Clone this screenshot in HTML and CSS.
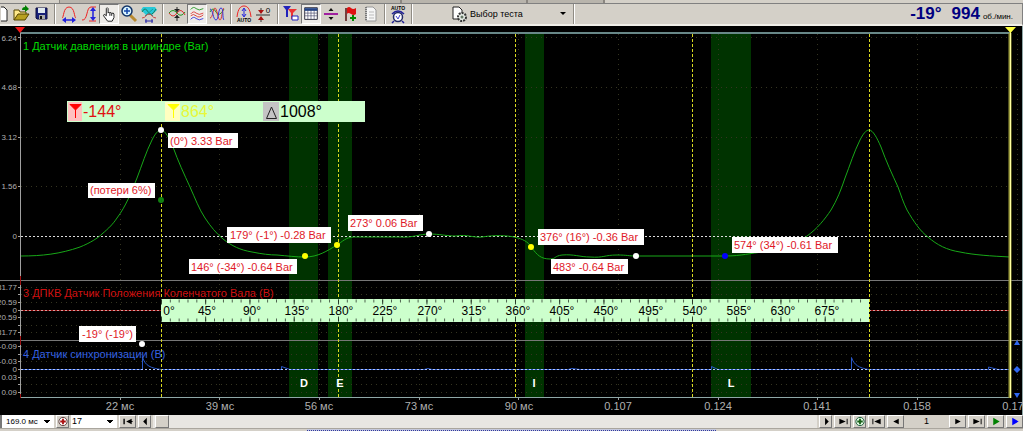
FILE: index.html
```html
<!DOCTYPE html>
<html lang="ru">
<head>
<meta charset="utf-8">
<title>Датчик давления в цилиндре</title>
<link rel="stylesheet" href="styles.css">
</head>
<body>
<div class="tabs"><span class="tab tab-first"></span><span class="tab tab-long"></span><span class="tab tab-mid"></span><span class="tab tab-short"></span></div>
<header class="toolbar">
  <div class="tools">
    <button class="tool tool-cut" aria-label="Новый"><svg viewBox="0 0 10 20"><path d="M-5 3H3L6 6V17H-5Z" fill="#fff" stroke="#222"/></svg></button>
    <button class="tool" aria-label="Открыть"><svg viewBox="0 0 20 20"><path d="M3 16V6H8L9 8H15V11" fill="#ffe98a" stroke="#554400"/><path d="M3 16L7 10H18L14 16Z" fill="#b8a020" stroke="#554400"/><path d="M11 6Q11 3 14 3V1L18 5L14 8V6Z" fill="#008000"/></svg></button>
    <button class="tool" aria-label="Сохранить"><svg viewBox="0 0 20 20"><path d="M5 4H16V15H6L5 14Z" fill="#182078" stroke="#101040"/><path d="M7 4H14V9H7Z" fill="#dfe8ee"/><path d="M8 11H14V15H8Z" fill="#aaa"/><path d="M9 12H11V15H9Z" fill="#111"/></svg></button>
    <i class="sep wide"></i>
    <button class="tool" aria-label="Период"><svg viewBox="0 0 20 20" fill="none"><path d="M3 14C5 14 4 3 10 3S15 14 17 14" stroke="#e22"/><path d="M6 16H14" stroke="#22d" stroke-width="1.5"/><path d="M3 16L7 13V19ZM17 16L13 13V19Z" fill="#22d"/></svg></button>
    <button class="tool" aria-label="Амплитуда"><svg viewBox="0 0 20 20" fill="none"><path d="M3 16C9 17 7 3 12 3H17M10 17H17" stroke="#e22"/><path d="M14 5V15" stroke="#22d" stroke-width="1.5"/><path d="M14 3L11 7H17ZM14 17L11 13H17Z" fill="#22d"/></svg></button>
    <button class="tool pressed" aria-label="Рука"><svg viewBox="0 0 20 20"><path d="M7 12V4Q8 2 9 4V9Q10 7 11 9Q12 7 13 9.500Q15 8 15.500 10V14L13.500 18H8.500L4 12Q4 9 7 12" fill="#fff" stroke="#111"/><path d="M11 9V12M13 9.500V12" stroke="#111"/></svg></button>
    <button class="tool" aria-label="Увеличить"><svg viewBox="0 0 20 20"><path d="M11 11L17 17" stroke="#b88a30" stroke-width="3"/><circle cx="8" cy="7" r="5" fill="#d8f4ff" stroke="#113366" stroke-width="1.500"/><path d="M5 7H11M8 4V10" stroke="#1144aa" stroke-width="1.500"/></svg></button>
    <button class="tool" aria-label="Сжать"><svg viewBox="0 0 20 20"><path d="M4 3H16L18 6L13 11H7L2 6Z" fill="#28c8d8"/><path d="M3 8Q6 2 9 8T17 5" fill="none" stroke="#187858"/><path d="M6 5L14 12M14 5L6 12" stroke="#16a0a0"/><path d="M3 14C7 14 7 10 10 10S13 14 17 14" fill="none" stroke="#c44"/><path d="M6 17H14M7 15V19M13 15V19" stroke="#22a"/></svg></button>
    <i class="sep wide"></i>
    <button class="tool" aria-label="Сброс"><svg viewBox="0 0 20 20" fill="none"><path d="M2 9Q6 4 10 9T18 8" stroke="#292"/><path d="M2 9Q6 15 10 9T18 11" stroke="#d33"/><path d="M10 3V8M10 11V17" stroke="#222"/><path d="M7 5H13L10 8ZM7 14H13L10 11Z" fill="#222"/></svg></button>
    <button class="tool pressed" aria-label="Раздельно"><svg viewBox="0 0 20 20" fill="none"><path d="M3 5Q6 1 9 4T17 4" stroke="#292"/><path d="M3 10Q6 6 9 9T17 9M3 12Q6 9 9 12T17 11" stroke="#d33"/><path d="M3 16Q6 12 9 15T17 15" stroke="#33d"/></svg></button>
    <button class="tool" aria-label="Вместе"><svg viewBox="0 0 20 20" fill="none"><path d="M3 8Q6 2 9 8T17 5" stroke="#292"/><path d="M3 14C6 14 6 4 8 4S11 16 13 16S15 5 17 4" stroke="#d33"/><path d="M3 5C6 5 6 16 9 16S11 4 14 4S15 15 17 16" stroke="#33d"/></svg></button>
    <i class="sep"></i>
    <button class="tool" aria-label="Авто масштаб"><svg viewBox="0 0 20 20"><path d="M3 13C4 4 7 2 10 2S16 4 17 13" fill="none" stroke="#e22"/><path d="M10 5V12M8 7L10 4L12 7M8 10L10 13L12 10" fill="none" stroke="#22d"/><text x="10" y="18" class="micro">AUTO</text></svg></button>
    <button class="tool" aria-label="Ноль"><svg viewBox="0 0 20 20"><path d="M2 11H16M7 4V9M7 13V18" stroke="#333"/><path d="M4 6H10L7 10ZM4 16H10L7 12Z" fill="#a11"/><text x="14" y="9" class="zero">0</text></svg></button>
    <i class="sep"></i>
    <button class="tool" aria-label="Маркеры"><svg viewBox="0 0 20 20"><path d="M2 2H10L7 6V13H5V6Z" fill="#2222bb"/><path d="M7 5H16L12 9V15H10V9Z" fill="#e33"/><path d="M11 12H17V16H11Z" fill="#fff" stroke="#22b"/></svg></button>
    <button class="tool pressed" aria-label="Таблица"><svg viewBox="0 0 20 20"><path d="M3 3H17V16H3Z" fill="#fff" stroke="#223"/><path d="M3 5H17" stroke="#248" stroke-width="3"/><path d="M3 9H17M3 12H17M6.500 5V16M10 5V16M13.500 5V16" stroke="#446" stroke-width=".7"/></svg></button>
    <button class="tool" aria-label="Разделить"><svg viewBox="0 0 20 20"><path d="M3 10H17" stroke="#a020a0" stroke-width="2"/><path d="M10 4L12.500 7H7.500ZM10 16L12.500 13H7.500Z" fill="#111"/></svg></button>
    <button class="tool" aria-label="Флаг"><svg viewBox="0 0 20 20"><path d="M5 4V17" stroke="#511" stroke-width="1.500"/><path d="M6 4Q8 2 10 4T15 4V10Q13 12 10 10T6 10Z" fill="#d11"/><path d="M9 14H15M12 11V17" stroke="#080" stroke-width="2"/></svg></button>
    <button class="tool" aria-label="Отчёт"><svg viewBox="0 0 20 20"><path d="M5 3H12L15 6V17H5Z" fill="#f6f6f6" stroke="#999"/><path d="M5 3V17" stroke="#777" stroke-dasharray="1 1" stroke-width="2"/><path d="M8 8H13M8 11H13M8 14H13" stroke="#bbb"/></svg></button>
    <i class="sep"></i>
    <button class="tool" aria-label="Авто тест"><svg viewBox="0 0 20 20"><circle cx="10" cy="13" r="4.500" fill="#fff" stroke="#222a66" stroke-width="1.500"/><path d="M8 12L10 15L12 11" fill="none" stroke="#44c"/><path d="M4 10Q10 4 16 10M6 17L4 19M14 17L16 19" fill="none" stroke="#229" stroke-width="1.500"/><text x="10" y="6" class="micro">AUTO</text></svg></button>
    <i class="sep"></i>
  </div>
  <button class="test-menu"><svg class="test-icon" viewBox="0 0 18 18"><path d="M2 2H8L11 5V14H2Z" fill="#fff" stroke="#222"/><circle cx="11" cy="12" r="4" fill="#e8eee8" stroke="#333" stroke-width="2" stroke-dasharray="2 1"/><circle cx="11" cy="12" r="1.500" fill="#676"/></svg><span>Выбор теста</span><svg class="caret" viewBox="0 0 6 4"><path d="M0 0H6L3 3Z"/></svg></button>
  <i class="sep"></i>
  <div class="reading"><b>-19°</b><b>994</b><small>об./мин.</small></div>
</header>

<main class="scope">
<svg class="plot" viewBox="0 26 1023 389" role="img" aria-label="Осциллограмма">
  <g class="bands"><path d="M289 33H318V397H289ZM328 33H352V397H328ZM525 33H544V397H525ZM711 33H751V397H711Z"/></g>
  <g class="grid">
    <path d="M120.500 34V397M219.500 34V397M319.500 34V397M419.500 34V397M518.500 34V397M618.500 34V397M718.500 34V397M817.500 34V397M917.500 34V397M1017.500 34V397"/>
    <path d="M21 37.500H1010M21 87.500H1010M21 137.500H1010M21 186.500H1010M21 287.500H1010M21 294.500H1010M21 302.500H1010M21 317.500H1010M21 325.500H1010M21 332.500H1010M21 346.500H1010M21 354.500H1010M21 361.500H1010M21 377.500H1010M21 384.500H1010M21 392.500H1010"/>
  </g>
  <path class="divider" d="M0 280.500H1023M0 340.500H1023"/>
  <path class="frame-top" d="M20 33H1011"/>
  <path class="frame-bottom" d="M20 397.500H1011"/>
  <path class="axis" d="M20.500 33V397M18 37.500H20M18 87.500H20M18 137.500H20M18 186.500H20M18 236.500H20M18 287.500H20M18 294.500H20M18 302.500H20M18 310.500H20M18 317.500H20M18 325.500H20M18 332.500H20M18 346.500H20M18 354.500H20M18 361.500H20M18 369.500H20M18 377.500H20M18 384.500H20M18 392.500H20M120.500 398V400M219.500 398V400M319.500 398V400M419.500 398V400M518.500 398V400M618.500 398V400M718.500 398V400M817.500 398V400M917.500 398V400"/>
  <path class="red-line" d="M20.500 276V285M20.500 336V345M20.500 394V398"/>
  <path class="zero-line" d="M21 236.500H1010"/>
  <path class="red-line" d="M21 310.500H1010"/><path class="zero-line faint" d="M21 310.500H1010"/>
  <path class="sync" d="M21 369.500H142.500V357C145 366 151 368 161 369.500H281.500V366.500L290 369.500H424L428 368.500L432 369.500H568L572 368.500L580 369.500H711.500V366.500L718 369.500H851.500V357.500C854 365 859 368 869 369.500H988.500V367L998 369.500H1010"/>
  <path class="zero-line blue-dots" d="M21 369.500H1010"/>
  <path class="pressure" d="M21 256C42 256 60 254 80 247C90 243 98 238 102 234C109 228 113 224 117 218C126 206 131 193 137 178C142 165 146 152 152 140C155 134 158 130 161 130C165 130 169 138 173 147C178 161 184 174 190 187C195 198 199 209 205 218C211 227 216 233 223 239C232 246 240 250 252 252C262 254 270 255 277 255C288 256 296 257 305 257C318 257 327 251 337 245C342 242 346 237 354 237H400C412 238 420 234 429 234C440 234 446 236 456 236C466 234 474 238 482 237C494 235 508 235 518 238C525 240 529 243 532 248C537 255 541 259 550 259C556 259 554 256 562 255C574 254 580 257 590 257C604 258 604 255 617 255C628 255 628 256 636 256H725C742 256 750 253 764 252C782 250 796 244 807 236C817 229 825 219 831 210C837 200 841 190 845 178C850 165 854 152 860 140C863 134 866 130 869 130C873 130 877 138 881 147C886 161 892 174 898 187C901 195 903 202 907 210C914 222 920 231 928 237C937 245 947 250 960 252C974 255 991 256 1010 257"/>
  <path class="marker" d="M161.500 34V397M338.500 34V397M515.500 34V397M692.500 34V397M869.500 34V397"/>
  <path class="cursor-glow" d="M1010 33V398"/><path class="cursor" d="M1010.500 30V398"/>
  <path class="cursor-head" d="M1005 27H1016L1010.500 33Z"/>
  <path class="origin-head" d="M15 27H25L20 33Z"/>
  <path class="frame-bottom" d="M1022.500 26V415"/>

  <g class="y-label">
    <text x="17" y="41">6.24</text><text x="17" y="90">4.68</text><text x="17" y="140">3.12</text><text x="17" y="189">1.56</text><text x="17" y="239">0</text>
    <text x="17" y="290">31.77</text><text x="17" y="305">20.59</text><text x="17" y="313">0</text><text x="17" y="320">20.59</text><text x="17" y="335">31.77</text>
    <text x="17" y="349">-0.09</text><text x="17" y="364">-0.03</text><text x="17" y="372">0</text><text x="17" y="380">0.03</text><text x="17" y="395">0.09</text>
  </g>
  <g class="x-label">
    <text x="120" y="410">22 мс</text><text x="220" y="410">39 мс</text><text x="319" y="410">56 мс</text><text x="419" y="410">73 мс</text><text x="519" y="410">90 мс</text>
    <text x="618" y="410">0.107</text><text x="718" y="410">0.124</text><text x="817" y="410">0.141</text><text x="917" y="410">0.158</text><text x="1013" y="410">0.17</text>
  </g>
  <g class="channel">
    <text class="ch1" x="23" y="50">1 Датчик давления в цилиндре (Bar)</text>
    <text class="ch3" x="23" y="297">3 ДПКВ Датчик Положения Коленчатого Вала (В)</text>
    <text class="ch4" x="23" y="358">4 Датчик синхронизации (В)</text>
  </g>

  <g class="ruler">
    <path class="ruler-bg" d="M161 299H869V322H161Z"/>
    <path class="ruler-ticks" pathLength="800" d="M161 301H869"/><path class="ruler-ticks" pathLength="800" d="M161 320H869"/>
    <path class="ruler-major" pathLength="800" d="M161 302H869"/><path class="ruler-major" pathLength="800" d="M161 319H869"/>
    <text x="169" y="315">0°</text><text x="207" y="315">45°</text><text x="252" y="315">90°</text><text x="297" y="315">135°</text><text x="341" y="315">180°</text><text x="385" y="315">225°</text><text x="430" y="315">270°</text><text x="474" y="315">315°</text><text x="518" y="315">360°</text><text x="562" y="315">405°</text><text x="606" y="315">450°</text><text x="651" y="315">495°</text><text x="695" y="315">540°</text><text x="739" y="315">585°</text><text x="783" y="315">630°</text><text x="827" y="315">675°</text>
  </g>

  <g class="phase"><text x="304" y="387">D</text><text x="340" y="387">E</text><text x="534" y="387">I</text><text x="731" y="387">L</text></g>

  <g class="notes">
    <rect x="168" y="133" width="70" height="15"/><text x="170" y="145">(0°) 3.33 Bar</text>
    <rect x="88" y="183" width="67" height="15"/><text x="90" y="194">(потери 6%)</text>
    <rect x="227" y="227" width="104" height="16"/><text x="230" y="239">179° (-1°) -0.28 Bar</text>
    <rect x="189" y="259" width="108" height="15"/><text x="191" y="271">146° (-34°) -0.64 Bar</text>
    <rect x="348" y="215" width="75" height="16"/><text x="350" y="227">273° 0.06 Bar</text>
    <rect x="538" y="229" width="106" height="16"/><text x="540" y="241">376° (16°) -0.36 Bar</text>
    <rect x="551" y="259" width="77" height="15"/><text x="553" y="271">483° -0.64 Bar</text>
    <rect x="732" y="237" width="106" height="16"/><text x="734" y="249">574° (34°) -0.61 Bar</text>
    <rect x="79" y="326" width="57" height="16"/><text x="82" y="338">-19° (-19°)</text>
  </g>
  <g class="dots">
    <circle cx="161" cy="130" r="3"/><circle cx="429" cy="234" r="3"/><circle cx="636" cy="256" r="3"/><circle cx="142" cy="344" r="3"/>
    <circle class="yellow" cx="305" cy="256" r="3"/><circle class="yellow" cx="337" cy="245" r="3"/><circle class="yellow" cx="531" cy="247" r="3"/>
    <circle class="green" cx="161" cy="200" r="3"/><circle class="blue" cx="725" cy="256" r="3"/>
  </g>

  <g class="readout">
    <path class="ruler-bg" d="M67 101H365V122H67Z"/>
    <path class="cell-red" d="M68 102H82V121H68Z"/><path class="cell-yellow" d="M165 102H180V121H165Z"/><path class="cell-gray" d="M263 102H279V121H263Z"/>
    <path class="mark-red" d="M70 104.500H81L75.500 110V118V110Z"/><path class="mark-yellow" d="M168 104.500H179L173.500 110V118V110Z"/><path class="mark-delta" d="M271.500 107L276.500 118.500H266.500Z"/>
    <text class="t-red" x="83" y="117">-144°</text><text class="t-yellow" x="181" y="117">864°</text><text x="280" y="117">1008°</text>
  </g>

  <path class="side-arrows" d="M1014 345L1017 340L1020 345ZM1017 366L1020.500 369.500L1017 373L1013.500 369.500ZM1014 393L1017 398L1020 393Z"/>
</svg>
</main>

<footer class="transport">
  <select class="field span" aria-label="Развёртка"><option>169.0 мс</option></select>
  <button class="nav small" aria-label="Увеличить масштаб"><svg viewBox="0 0 12 12"><circle cx="6" cy="6" r="4.500" fill="#fff" stroke="#533"/><path d="M3 6H9M6 3V9" stroke="#a11" stroke-width="2"/></svg></button>
  <select class="field count" aria-label="Цилиндр"><option>17</option></select>
  <button class="nav" aria-label="В начало"><svg viewBox="0 0 12 12"><path d="M1 3H2.500V9H1ZM10 3V9L4 6ZM9 5.500H11V6.500H9Z"/></svg></button>
  <button class="nav small" aria-label="Влево"><svg viewBox="0 0 12 12"><path d="M8 2V10L4 6Z"/></svg></button>
  <div class="track"><button class="thumb" aria-label="Прокрутка"></button></div>
  <button class="nav small" aria-label="Вправо"><svg viewBox="0 0 12 12"><path d="M5 2V10L9 6Z"/></svg></button>
  <button class="nav" aria-label="В конец"><svg viewBox="0 0 12 12"><path d="M10 3H11V9H10ZM2 3V9L9 6Z"/></svg></button>
  <button class="nav small" aria-label="Добавить кадр"><svg viewBox="0 0 12 12"><circle cx="6" cy="6" r="4.500" fill="#e8ffe8" stroke="#153"/><path d="M3 6H9M6 3V9" stroke="#186018" stroke-width="2"/></svg></button>
  <button class="nav" aria-label="Первый кадр"><svg viewBox="0 0 12 12"><path d="M1 3H2V9H1ZM10 3V9L3 6Z"/></svg></button>
  <button class="nav" aria-label="Предыдущий кадр"><svg viewBox="0 0 12 12"><path d="M9 3V9L3 6Z"/></svg></button>
  <output class="frame-no">1</output>
  <button class="nav" aria-label="Следующий кадр"><svg viewBox="0 0 12 12"><path d="M3 3V9L9 6Z"/></svg></button>
  <button class="nav" aria-label="Последний кадр"><svg viewBox="0 0 12 12"><path d="M10 3H11V9H10ZM2 3V9L9 6Z"/></svg></button>
  <button class="nav go" aria-label="Пуск"><svg viewBox="0 0 12 12"><path d="M3 2V10L10 6Z"/></svg></button>
  <button class="nav run" aria-label="Воспроизвести"><svg viewBox="0 0 12 12"><path d="M3 2V10L10 6Z"/></svg></button>
</footer>
<div class="splitter"><span class="grip"></span></div>
</body>
</html>
```
FILE: styles.css
```css
* { box-sizing: border-box; }
body {
  margin: 0;
  min-height: 100vh;
  display: flex;
  flex-direction: column;
  overflow: hidden;
  background: #d4d0c8;
  font-family: "Liberation Sans", Arial, sans-serif;
  color: #000;
}
button { padding: 0; border: 0; background: none; font: inherit; color: inherit; }

.tabs { display: flex; height: 4px; border-bottom: 1px solid #808080; }
.tab { background: #b8b4ac; border-right: 2px solid #8a8680; }
.tab-first { width: 60px; background: #d4d0c8; border-right-width: 1px; }
.tab-long { width: 342px; }
.tab-mid { width: 126px; }
.tab-short { width: 77px; }

.toolbar {
  display: flex;
  align-items: stretch;
  height: 22px;
  border-bottom: 2px solid #f0eee8;
  border-right: 1px solid #808080;
}
.tools { display: flex; }
.tool { width: 20px; display: flex; align-items: center; justify-content: center; }
.tool svg { width: 20px; height: 20px; }
.tool-cut { width: 11px; }
.tool-cut svg { width: 10px; }
.pressed { background: #eeece8; border: 1px solid #fff; border-top-color: #777; border-left-color: #777; }
.sep { width: 7px; flex: none; background: linear-gradient(90deg, transparent 3px, #908c84 3px, #908c84 4px, #fff 4px, #fff 5px, transparent 5px); }
.sep.wide { width: 8px; }
.micro { font-size: 5px; font-weight: bold; text-anchor: middle; }
.zero { font-size: 8px; text-anchor: middle; }
.test-menu { display: flex; align-items: center; gap: 1px; width: 155px; padding: 0 4px 0 36px; font-size: 9px; }
.test-menu span { flex: 1; text-align: left; white-space: nowrap; }
.test-icon { width: 18px; height: 18px; }
.caret { width: 6px; height: 4px; }
.reading { margin-left: auto; padding-right: 9px; display: flex; align-items: baseline; color: #000080; font-size: 17px; line-height: 20px; }
.reading b + b { margin-left: 10px; }
.reading small { margin-left: 3px; font-size: 8px; color: #000; }

.scope { background: #000; }
.plot { display: block; width: 100%; height: auto; }
.plot path { fill: none; }
.plot .bands path { fill: #003300; }
.grid { stroke: #343420; stroke-dasharray: 1 4; }
.divider { stroke: #777; }
.frame-top { stroke: #688888; stroke-width: 2; }
.frame-bottom { stroke: #8fa8a8; }
.axis { stroke: #a0a0a0; }
.zero-line { stroke: #ddd; stroke-dasharray: 2 2; }
.faint { stroke: #d8a0a0; }
.red-line { stroke: #a01010; }
.sync { stroke: #2858c8; }
.blue-dots { stroke: #b8c8ff; }
.pressure { stroke: #18a818; }
.marker { stroke: #d8d820; stroke-dasharray: 3 2; }
.cursor-glow { stroke: #a0a040; stroke-width: 3; }
.cursor { stroke: #ffffa0; }
.plot .cursor-head { fill: #ffff40; }
.plot .origin-head { fill: #f01818; }
.plot .side-arrows { fill: #3068f0; }

.y-label { fill: #b0b0b0; font-size: 8px; text-anchor: end; }
.x-label { fill: #b0b0b0; font-size: 11px; text-anchor: middle; }
.channel { font-size: 11px; }
.ch1 { fill: #00d800; }
.ch3 { fill: #d01010; }
.ch4 { fill: #3460e0; }

.plot .ruler-bg { fill: #ccffcc; }
.ruler { font-size: 12px; text-anchor: middle; }
.ruler-ticks { stroke: #405040; stroke-width: 3; stroke-dasharray: 1 9; }
.ruler-major { stroke: #203020; stroke-width: 5; stroke-dasharray: 1 49; }
.phase { fill: #fff; font-size: 11px; font-weight: bold; text-anchor: middle; }
.notes { font-size: 11px; fill: #e01828; }
.notes rect { fill: #fff; }
.dots { fill: #fff; }
.yellow { fill: #ffff00; }
.green { fill: #108010; }
.blue { fill: #0000ff; }

.readout { font-size: 16px; }
.plot .cell-red { fill: #ffc0c0; }
.plot .cell-yellow { fill: #ffffc0; }
.plot .cell-gray { fill: #c4c4c4; }
.plot .mark-red { fill: #f00; stroke: #f00; }
.plot .mark-yellow { fill: #ff0; stroke: #ff0; }
.mark-delta { stroke: #222; }
.t-red { fill: #e01010; }
.t-yellow { fill: #e8f838; }

.transport { display: flex; height: 13px; gap: 2px; }
.field {
  appearance: none;
  border: 0;
  border-radius: 0;
  padding: 0 0 0 4px;
  height: 13px;
  font: 9px/13px "Liberation Sans", Arial, sans-serif;
  color: #000;
  background: linear-gradient(90deg, #000, #000) right 4px top 5px / 6px 1px no-repeat,
    linear-gradient(90deg, #000, #000) right 5px top 6px / 4px 1px no-repeat,
    linear-gradient(90deg, #000, #000) right 6px top 7px / 2px 1px no-repeat, #fff;
}
.span { width: 54px; border-left: 2px solid #777; font-size: 8px; }
.count { width: 46px; padding-left: 1px; }
.nav { width: 17px; flex: none; display: flex; align-items: center; justify-content: center; border: 1px solid #777; border-top-color: #fff; border-left-color: #fff; background: #d4d0c8; }
.nav svg { width: 12px; height: 11px; flex: none; }
.nav.small { width: 13px; }
.go { fill: #008000; }
.run { fill: #0000ff; }
.track { flex: 1; padding-left: 2px; background: #e8e6e2; display: flex; }
.thumb { width: 14px; border: 1px solid #777; border-top-color: #fff; border-left-color: #fff; background: #d4d0c8; }
.frame-no { width: 41px; text-align: center; font-size: 9px; line-height: 13px; }
.splitter { flex: 1; min-height: 3px; display: flex; justify-content: center; border-top: 1px solid #aaa69e; }
.grip { width: 40%; border-bottom: 1px dotted #3038a0; background: #c4c8dc; }
```
